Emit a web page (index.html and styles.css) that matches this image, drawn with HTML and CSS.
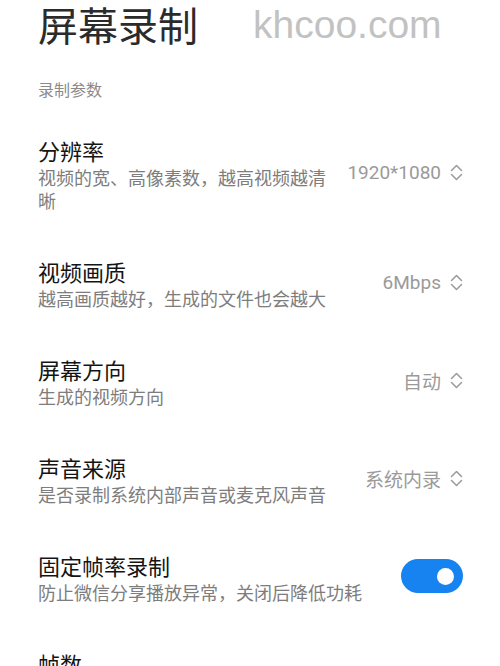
FILE: index.html
```html
<!DOCTYPE html>
<html lang="zh-CN">
<head>
<meta charset="utf-8">
<title>屏幕录制</title>
<link rel="stylesheet" href="styles.css">
</head>
<body>
<div class="page">
  <header class="header">
    <h1 class="title">屏幕录制</h1>
    <span class="watermark">khcoo.com</span>
  </header>
  <div class="section-label">录制参数</div>

  <div class="row">
    <div class="text">
      <div class="row-title">分辨率</div>
      <div class="row-sub">视频的宽、高像素数，越高视频越清晰</div>
    </div>
    <div class="value">
      <span>1920*1080</span>
      <svg class="chev" viewBox="0 0 13 19" width="13" height="19"><path d="M1.5 7.5 L6.5 2.5 L11.5 7.5 M1.5 11.5 L6.5 16.5 L11.5 11.5" fill="none" stroke="#9a9a9a" stroke-width="1.5" stroke-linecap="round" stroke-linejoin="round"/></svg>
    </div>
  </div>

  <div class="row">
    <div class="text">
      <div class="row-title">视频画质</div>
      <div class="row-sub">越高画质越好，生成的文件也会越大</div>
    </div>
    <div class="value">
      <span>6Mbps</span>
      <svg class="chev" viewBox="0 0 13 19" width="13" height="19"><path d="M1.5 7.5 L6.5 2.5 L11.5 7.5 M1.5 11.5 L6.5 16.5 L11.5 11.5" fill="none" stroke="#9a9a9a" stroke-width="1.5" stroke-linecap="round" stroke-linejoin="round"/></svg>
    </div>
  </div>

  <div class="row">
    <div class="text">
      <div class="row-title">屏幕方向</div>
      <div class="row-sub">生成的视频方向</div>
    </div>
    <div class="value">
      <span>自动</span>
      <svg class="chev" viewBox="0 0 13 19" width="13" height="19"><path d="M1.5 7.5 L6.5 2.5 L11.5 7.5 M1.5 11.5 L6.5 16.5 L11.5 11.5" fill="none" stroke="#9a9a9a" stroke-width="1.5" stroke-linecap="round" stroke-linejoin="round"/></svg>
    </div>
  </div>

  <div class="row">
    <div class="text">
      <div class="row-title">声音来源</div>
      <div class="row-sub">是否录制系统内部声音或麦克风声音</div>
    </div>
    <div class="value">
      <span>系统内录</span>
      <svg class="chev" viewBox="0 0 13 19" width="13" height="19"><path d="M1.5 7.5 L6.5 2.5 L11.5 7.5 M1.5 11.5 L6.5 16.5 L11.5 11.5" fill="none" stroke="#9a9a9a" stroke-width="1.5" stroke-linecap="round" stroke-linejoin="round"/></svg>
    </div>
  </div>

  <div class="row">
    <div class="text">
      <div class="row-title">固定帧率录制</div>
      <div class="row-sub">防止微信分享播放异常，关闭后降低功耗</div>
    </div>
    <div class="toggle on"><span class="knob"></span></div>
  </div>

  <div class="row">
    <div class="text">
      <div class="row-title">帧数</div>
    </div>
  </div>
</div>
</body>
</html>
```
FILE: styles.css
```css
* { box-sizing: border-box; }
html, body {
  margin: 0;
  padding: 0;
  background: #ffffff;
  height: 666px;
  overflow: hidden;
}
body {
  font-family: "Noto Sans CJK SC", "Noto Sans", sans-serif;
  color: #1a1a1a;
}
.page {
  padding: 0 37px 0 38px;
}
.header {
  display: flex;
  align-items: baseline;
  gap: 55px;
}
.title {
  margin: 0;
  font-size: 40px;
  line-height: 48px;
  font-weight: 400;
  color: #2b2b2b;
  letter-spacing: 0;
}
.watermark {
  font-family: "Liberation Sans", Arial, sans-serif;
  font-size: 39px;
  color: #c2c2c2;
  position: relative;
  top: -3px;
}
.section-label {
  margin-top: 28px;
  margin-bottom: 12px;
  font-size: 16px;
  line-height: 22px;
  color: #8a8a8a;
}
.row {
  display: flex;
  align-items: center;
  gap: 12px;
  padding: 21.5px 0;
}
.text {
  flex: 1;
  min-width: 0;
}
.row-title {
  font-size: 22px;
  line-height: 32px;
  color: #141414;
}
.row-sub {
  font-size: 18px;
  line-height: 23px;
  color: #7d7d7d;
}
.value {
  display: flex;
  align-items: center;
  gap: 9px;
  font-family: Roboto, "Noto Sans CJK SC", sans-serif;
  font-size: 19px;
  color: #9a9a9a;
  white-space: nowrap;
  flex: none;
}
.chev { display: block; flex: none; }
.toggle {
  width: 62px;
  height: 34px;
  border-radius: 17px;
  background: #1683f0;
  display: flex;
  align-items: center;
  justify-content: flex-end;
  padding-right: 9px;
  flex: none;
}
.knob {
  width: 17px;
  height: 17px;
  border-radius: 50%;
  background: #ffffff;
}
```
